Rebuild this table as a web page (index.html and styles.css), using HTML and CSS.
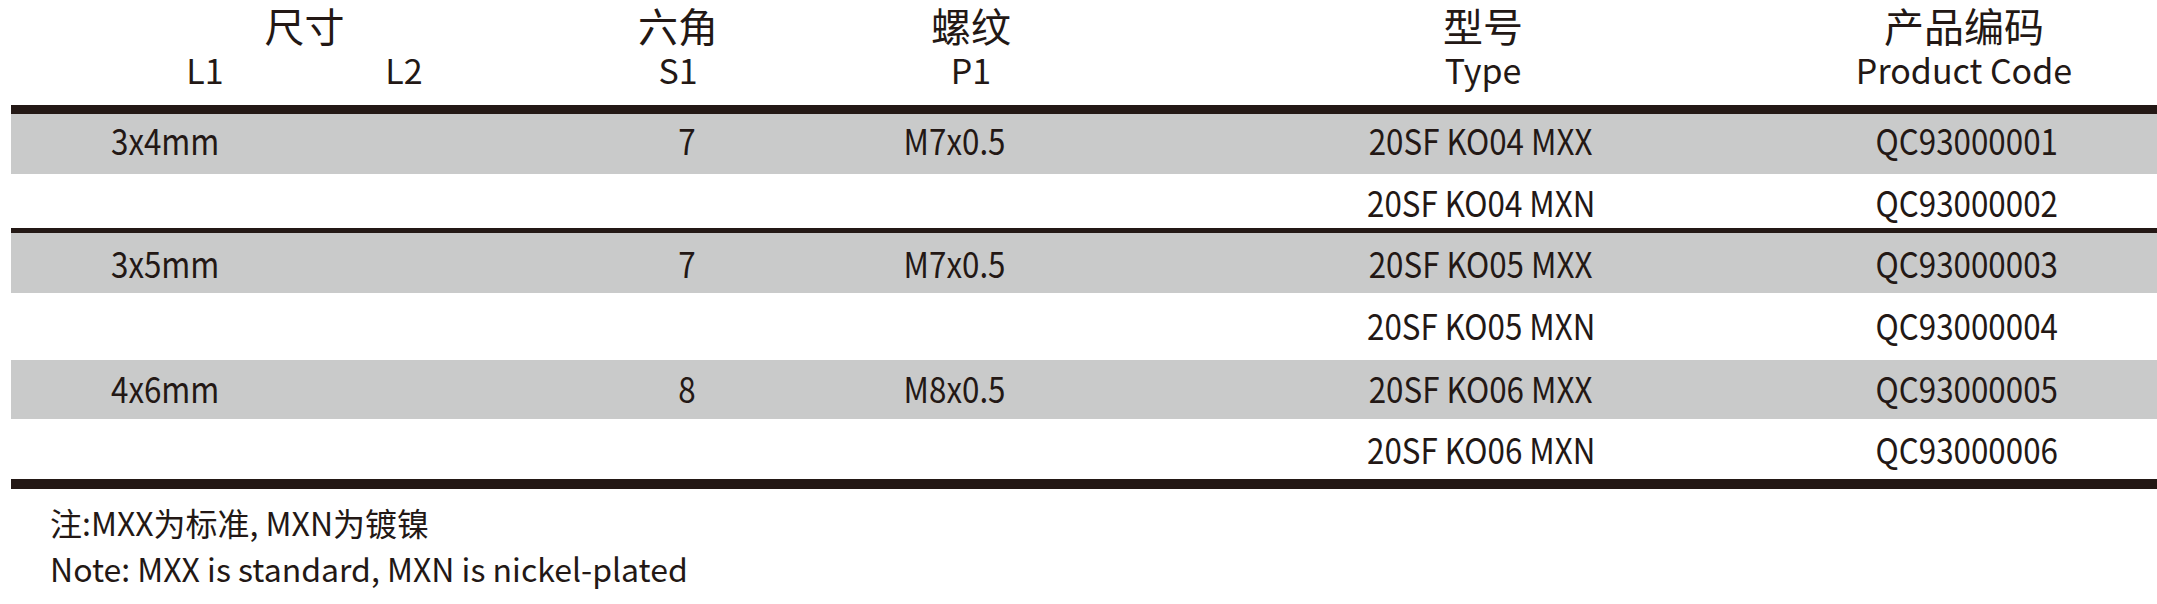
FILE: index.html
```html
<!DOCTYPE html>
<html lang="zh-CN">
<head>
<meta charset="utf-8">
<title>规格表</title>
<link rel="stylesheet" href="styles.css">
</head>
<body>
<div class="sheet">
  <div class="head">
    <div class="h-cn span2">尺寸</div>
    <div class="h-cn c-s1">六角</div>
    <div class="h-cn c-p1">螺纹</div>
    <div class="h-cn c-type">型号</div>
    <div class="h-cn c-code">产品编码</div>
    <div class="h-en c-l1">L1</div>
    <div class="h-en c-l2">L2</div>
    <div class="h-en c-s1">S1</div>
    <div class="h-en c-p1">P1</div>
    <div class="h-en c-type">Type</div>
    <div class="h-en c-code">Product Code</div>
  </div>
  <div class="rule rule-thick"></div>
  <div class="row gray r1">
    <div class="d-size"><span class="t">3x4mm</span></div><div class="d"><span class="t">7</span></div><div class="d"><span class="t">M7x0.5</span></div><div class="d"><span class="t">20SF KO04 MXX</span></div><div class="d"><span class="t">QC93000001</span></div>
  </div>
  <div class="row white r2">
    <div class="d-size"></div><div class="d"></div><div class="d"></div><div class="d"><span class="t">20SF KO04 MXN</span></div><div class="d"><span class="t">QC93000002</span></div>
  </div>
  <div class="rule rule-thin"></div>
  <div class="row gray r3">
    <div class="d-size"><span class="t">3x5mm</span></div><div class="d"><span class="t">7</span></div><div class="d"><span class="t">M7x0.5</span></div><div class="d"><span class="t">20SF KO05 MXX</span></div><div class="d"><span class="t">QC93000003</span></div>
  </div>
  <div class="row white r4">
    <div class="d-size"></div><div class="d"></div><div class="d"></div><div class="d"><span class="t">20SF KO05 MXN</span></div><div class="d"><span class="t">QC93000004</span></div>
  </div>
  <div class="row gray r5">
    <div class="d-size"><span class="t">4x6mm</span></div><div class="d"><span class="t">8</span></div><div class="d"><span class="t">M8x0.5</span></div><div class="d"><span class="t">20SF KO06 MXX</span></div><div class="d"><span class="t">QC93000005</span></div>
  </div>
  <div class="row white r6">
    <div class="d-size"></div><div class="d"></div><div class="d"></div><div class="d"><span class="t">20SF KO06 MXN</span></div><div class="d"><span class="t">QC93000006</span></div>
  </div>
  <div class="rule rule-bottom"></div>
  <div class="note">
    <p class="note-cn">注:MXX为标准, MXN为镀镍</p>
    <p class="note-en">Note: MXX is standard, MXN is nickel-plated</p>
  </div>
</div>
</body>
</html>
```

FILE: styles.css
```css
html, body {
  margin: 0;
  padding: 0;
  background: #ffffff;
}

body {
  font-family: "Noto Sans CJK SC", "Noto Sans", sans-serif;
  color: #231815;
}

.sheet {
  width: 2146px;
  margin-left: 11px;
}

/* ---------- header ---------- */
.head {
  height: 105px;
  box-sizing: border-box;
  padding-top: 1px;
  display: grid;
  grid-template-columns: 94.5px 199px 199px 349px 237px 787px 175px 1fr;
  grid-template-rows: 49px 42px;
  justify-items: center;
}

.h-cn {
  font-size: 40px;
  line-height: 49px;
  white-space: nowrap;
  grid-row: 1;
}

.h-en {
  font-size: 34px;
  line-height: 40px;
  white-space: nowrap;
  grid-row: 2;
}

.span2 { grid-column: 2 / 4; }
.c-l1 { grid-column: 2; }
.c-l2 { grid-column: 3; }
.c-s1 { grid-column: 4; }
.c-p1 { grid-column: 5; }
.c-type { grid-column: 6; }
.c-code { grid-column: 7; }

/* ---------- rules ---------- */
.rule { background: #231815; }
.rule-thick { height: 9px; }
.rule-thin { height: 5px; }
.rule-bottom { height: 10px; }

/* ---------- data rows ---------- */
.row {
  display: grid;
  grid-template-columns: 560px 232px 304px 748px 224px 1fr;
  box-sizing: border-box;
  font-size: 36px;
  line-height: 44px;
  white-space: nowrap;
}

.gray { background: #c9caca; }
.white { background: #ffffff; }

.r1 { height: 60px; padding-top: 3px; }
.r2 { height: 54px; padding-top: 5px; }
.r3 { height: 60px; padding-top: 7px; }
.r4 { height: 67px; padding-top: 9px; }
.r5 { height: 59px; padding-top: 5px; }
.r6 { height: 60px; padding-top: 7px; }

.t {
  display: inline-block;
  transform: scaleX(0.87);
}

.d-size {
  padding-left: 100px;
}

.d-size .t {
  transform-origin: left center;
}

.d {
  text-align: center;
}

/* ---------- note ---------- */
.note {
  padding-left: 39px;
  padding-top: 10px;
  font-size: 32px;
  line-height: 46px;
}

.note p {
  margin: 0;
  white-space: nowrap;
}
```
